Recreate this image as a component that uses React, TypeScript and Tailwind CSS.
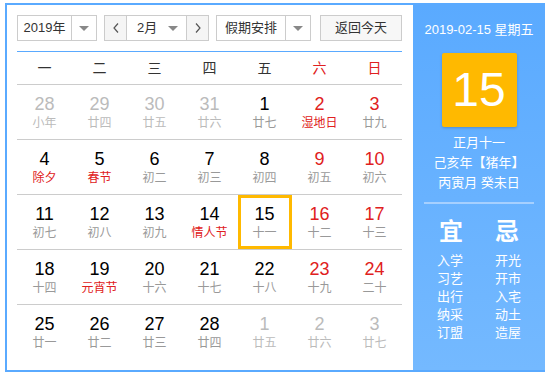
type Day = { d: number; l: string; muted?: boolean; red?: boolean; fest?: boolean; sel?: boolean };

const weeks: Day[][] = [
  [
    { d: 28, l: "小年", muted: true },
    { d: 29, l: "廿四", muted: true },
    { d: 30, l: "廿五", muted: true },
    { d: 31, l: "廿六", muted: true },
    { d: 1, l: "廿七" },
    { d: 2, l: "湿地日", red: true, fest: true },
    { d: 3, l: "廿九", red: true },
  ],
  [
    { d: 4, l: "除夕", fest: true },
    { d: 5, l: "春节", fest: true },
    { d: 6, l: "初二" },
    { d: 7, l: "初三" },
    { d: 8, l: "初四" },
    { d: 9, l: "初五", red: true },
    { d: 10, l: "初六", red: true },
  ],
  [
    { d: 11, l: "初七" },
    { d: 12, l: "初八" },
    { d: 13, l: "初九" },
    { d: 14, l: "情人节", fest: true },
    { d: 15, l: "十一", sel: true },
    { d: 16, l: "十二", red: true },
    { d: 17, l: "十三", red: true },
  ],
  [
    { d: 18, l: "十四" },
    { d: 19, l: "元宵节", fest: true },
    { d: 20, l: "十六" },
    { d: 21, l: "十七" },
    { d: 22, l: "十八" },
    { d: 23, l: "十九", red: true },
    { d: 24, l: "二十", red: true },
  ],
  [
    { d: 25, l: "廿一" },
    { d: 26, l: "廿二" },
    { d: 27, l: "廿三" },
    { d: 28, l: "廿四" },
    { d: 1, l: "廿五", muted: true },
    { d: 2, l: "廿六", muted: true },
    { d: 3, l: "廿七", muted: true },
  ],
];

const Caret = () => (
  <span className="w-0 h-0 border-l-[5px] border-r-[5px] border-t-[5px] border-l-transparent border-r-transparent border-t-[#888]" />
);

const DayCell = ({ day }: { day: Day }) => {
  const num = day.muted ? "text-[#bbb]" : day.red ? "text-[#e02020]" : "text-black";
  const lun = day.muted ? "text-[#bbb]" : day.fest ? "text-[#e02020]" : "text-[#999]";
  return (
    <div className="flex items-center justify-center h-[54px]">
      <div
        className={
          "flex flex-col items-center justify-center w-[54px] h-[54px] " +
          (day.sel ? "border-[3px] border-[#ffb900]" : "")
        }
      >
        <span className={"text-[18px] leading-[20px] " + num}>{day.d}</span>
        <span className={"text-[12px] leading-[16px] mt-[1px] " + lun}>{day.l}</span>
      </div>
    </div>
  );
};

const yi = ["入学", "习艺", "出行", "纳采", "订盟"];
const ji = ["开光", "开市", "入宅", "动土", "造屋"];

export default function App() {
  return (
    <div
      className="w-[545px] h-[374px] bg-white overflow-hidden pt-[3px] pl-[5px]"
      style={{ fontFamily: '"Liberation Sans", "Noto Sans CJK SC", sans-serif' }}
    >
      <div className="flex w-[540px] h-[369px] border-2 border-r-0 border-[#5aaaff]">
        {/* left: calendar */}
        <div className="w-[406px] pl-[10px] pr-[11px] pt-[10px]">
          <div className="flex items-center h-[26px] text-[13px] text-[#333]">
            <div className="flex w-[80px] h-[26px] border border-[#ccc]">
              <span className="flex-1 flex items-center justify-center">2019年</span>
              <span className="w-[25px] border-l border-[#ccc] flex items-center justify-center">
                <Caret />
              </span>
            </div>
            <div className="flex ml-[7px] w-[105px] h-[26px] border border-[#ccc]">
              <span className="w-[22px] bg-[#f5f5f5] border-r border-[#ccc] flex items-center justify-center">
                <svg width="8" height="10" viewBox="0 0 8 10" fill="none" stroke="#555" strokeWidth="1.2">
                  <path d="M6 0.5 L2 5 L6 9.5" />
                </svg>
              </span>
              <span className="flex-1 flex items-center pl-[10px] pr-[8px] justify-between">
                2月
                <Caret />
              </span>
              <span className="w-[22px] bg-[#f5f5f5] border-l border-[#ccc] flex items-center justify-center">
                <svg width="8" height="10" viewBox="0 0 8 10" fill="none" stroke="#555" strokeWidth="1.2">
                  <path d="M2 0.5 L6 5 L2 9.5" />
                </svg>
              </span>
            </div>
            <div className="flex ml-[7px] w-[95px] h-[26px] border border-[#ccc]">
              <span className="flex-1 flex items-center justify-center">假期安排</span>
              <span className="w-[25px] border-l border-[#ccc] flex items-center justify-center">
                <Caret />
              </span>
            </div>
            <div className="ml-[9px] w-[82px] h-[26px] border border-[#ccc] bg-[#f7f7f7] flex items-center justify-center">
              返回今天
            </div>
          </div>
          <div className="mt-[10px] h-px bg-[#5aaaff]" />
          <div className="grid grid-cols-7 h-[33px] items-center border-b border-[#ccc] text-[14px] text-[#333]">
            {["一", "二", "三", "四", "五", "六", "日"].map((w, i) => (
              <span key={w} className={"text-center " + (i >= 5 ? "text-[#e02020]" : "")}>
                {w}
              </span>
            ))}
          </div>
          {weeks.map((wk, i) => (
            <div
              key={i}
              className={"grid grid-cols-7 " + (i < weeks.length - 1 ? "border-b border-[#ccc]" : "")}
            >
              {wk.map((day, j) => (
                <DayCell key={j} day={day} />
              ))}
            </div>
          ))}
        </div>

        {/* right: today panel */}
        <div className="w-[132px] bg-gradient-to-b from-[#5aaaff] to-[#74b9ff] flex flex-col items-center text-white pt-[16px]">
          <div className="text-[13px] leading-[18px]">2019-02-15 星期五</div>
          <div className="mt-[14px] w-[75px] h-[74px] rounded-[2px] bg-[#ffb900] shadow-[0_1px_3px_rgba(0,0,0,0.2)] flex items-center justify-center text-[48px] leading-none">
            15
          </div>
          <div className="mt-[6px] flex flex-col items-center text-[13px] leading-[20px]">
            <span>正月十一</span>
            <span>己亥年【猪年】</span>
            <span>丙寅月 癸未日</span>
          </div>
          <div className="mt-[9px] w-[110px] h-[2px] bg-[#a6d0ff]" />
          <div className="mt-[14px] flex gap-[32px] text-[24px] leading-[28px] font-bold">
            <span>宜</span>
            <span>忌</span>
          </div>
          <div className="mt-[6px] flex gap-[32px] text-[13px] leading-[18px]">
            <div className="flex flex-col">
              {yi.map((t) => (
                <span key={t}>{t}</span>
              ))}
            </div>
            <div className="flex flex-col">
              {ji.map((t) => (
                <span key={t}>{t}</span>
              ))}
            </div>
          </div>
        </div>
      </div>
    </div>
  );
}
